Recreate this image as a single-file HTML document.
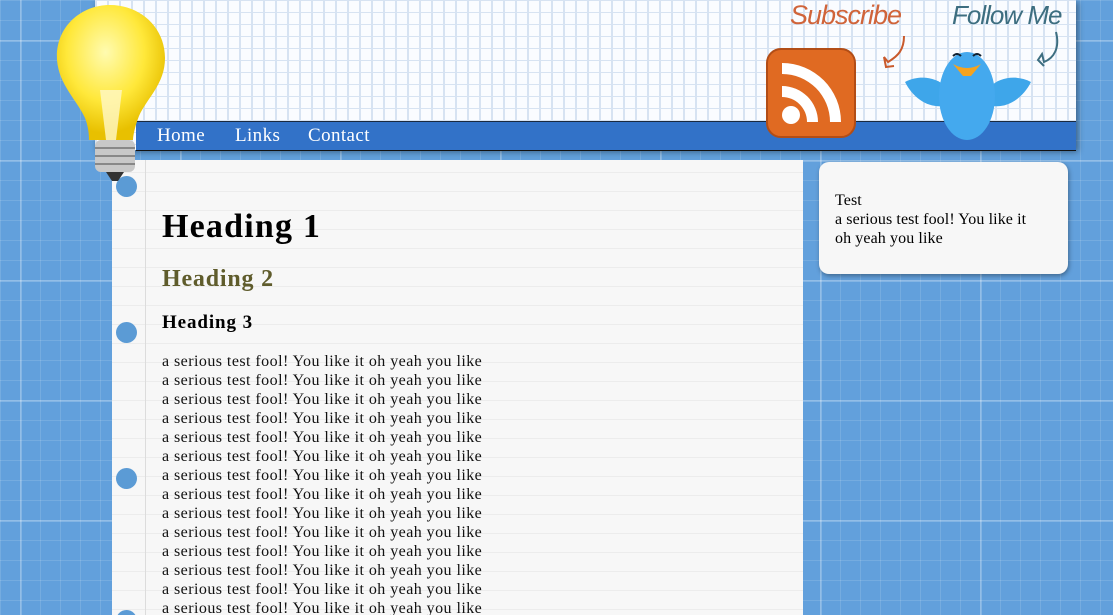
<!DOCTYPE html>
<html><head><meta charset="utf-8"><style>
*{margin:0;padding:0;box-sizing:border-box}
html,body{width:1113px;height:615px;overflow:hidden}
body{background:#62a0dc;font-family:"Liberation Serif",serif;position:relative;
background-image:linear-gradient(rgba(255,255,255,.22) 2px,transparent 2px),linear-gradient(90deg,rgba(255,255,255,.22) 2px,transparent 2px),linear-gradient(rgba(255,255,255,.12) 1px,transparent 1px),linear-gradient(90deg,rgba(255,255,255,.12) 1px,transparent 1px);background-size:160px 120px,160px 120px,20px 20px,20px 20px;background-position:20px 40px}
.header{position:absolute;left:95px;top:0;width:981px;height:150px;background-color:#fafcff;
background-image:linear-gradient(#d7e3f2 1px,transparent 1px),linear-gradient(90deg,#d7e3f2 2px,transparent 2px);background-size:12px 12px;box-shadow:2px 2px 6px rgba(0,0,0,.4)}
.nav{position:absolute;left:136px;top:121px;width:940px;height:30px;background:#3272c8;border-top:1px solid #1a2a40;border-bottom:1px solid #111}
.nav a{position:absolute;top:3px;color:#fff;font-size:19px;letter-spacing:.4px;text-decoration:none}
.paper{position:absolute;left:112px;top:160px;width:691px;height:460px;background-color:#f7f7f7;
background-image:linear-gradient(transparent 18px,#ececec 18px,#ececec 19px,transparent 19px);background-size:100% 19px;background-position:0 13px}
.margin{position:absolute;left:145px;top:160px;width:1px;height:460px;background:#dcdcdc}
.hole{position:absolute;left:116px;width:21px;height:21px;border-radius:50%;background:#5b9bd5}
h1{position:absolute;top:208px;left:162px;font-size:34px;letter-spacing:1.2px;font-weight:bold;white-space:nowrap}
h2{position:absolute;top:266px;left:162px;font-size:24px;letter-spacing:.8px;color:#5f5c2c;white-space:nowrap}
h3{position:absolute;top:312px;left:162px;font-size:19px;letter-spacing:.9px;white-space:nowrap}
.txt{position:absolute;left:162px;top:352px;font-size:16px;line-height:19px;letter-spacing:.45px;color:#111;white-space:nowrap}
.side{position:absolute;left:819px;top:162px;width:249px;height:112px;background:#f7f7f7;border-radius:10px;box-shadow:1px 2px 5px rgba(0,0,0,.35);padding:29px 16px;font-size:16px;line-height:19px;letter-spacing:.1px}
</style></head><body>
<div class="header"></div>
<div class="nav"><a style="left:21px">Home</a><a style="left:99px">Links</a><a style="left:172px">Contact</a></div>
<div class="paper"></div><div class="margin"></div>
<div class="hole" style="top:176px"></div><div class="hole" style="top:322px"></div><div class="hole" style="top:468px"></div><div class="hole" style="top:610px"></div>
<h1>Heading 1</h1><h2>Heading 2</h2><h3>Heading 3</h3>
<div class="txt">a serious test fool! You like it oh yeah you like<br>a serious test fool! You like it oh yeah you like<br>a serious test fool! You like it oh yeah you like<br>a serious test fool! You like it oh yeah you like<br>a serious test fool! You like it oh yeah you like<br>a serious test fool! You like it oh yeah you like<br>a serious test fool! You like it oh yeah you like<br>a serious test fool! You like it oh yeah you like<br>a serious test fool! You like it oh yeah you like<br>a serious test fool! You like it oh yeah you like<br>a serious test fool! You like it oh yeah you like<br>a serious test fool! You like it oh yeah you like<br>a serious test fool! You like it oh yeah you like<br>a serious test fool! You like it oh yeah you like</div>
<div class="side">Test<br>a serious test fool! You like it<br>oh yeah you like</div>
<svg style="position:absolute;left:50px;top:0" width="120" height="185" viewBox="0 0 120 185">
<defs><radialGradient id="bg" cx=".45" cy=".35" r=".6"><stop offset="0" stop-color="#fffbb0"/><stop offset=".6" stop-color="#ffe83a"/><stop offset="1" stop-color="#e8c000"/></radialGradient></defs>
<path d="M60 5C30 5 5 28 7 60c2 25 20 40 28 58 4 10 4 20 4 22h44c0-4 2-14 6-24 8-18 26-32 26-58C115 27 90 5 60 5z" fill="url(#bg)"/>
<path d="M50 90l6 50h10l6-50" fill="#fff8c8" opacity=".8"/>
<rect x="45" y="140" width="40" height="32" rx="6" fill="#c8c8c8"/>
<path d="M45 148h40M45 156h40M45 164h40" stroke="#888" stroke-width="2"/>
<path d="M56 172h18l-6 9h-6z" fill="#333"/>
</svg>
<svg style="position:absolute;left:766px;top:48px" width="90" height="90" viewBox="0 0 90 90">
<rect x="1" y="1" width="88" height="88" rx="14" fill="#e06a22" stroke="#b24d16" stroke-width="2"/>
<circle cx="25" cy="67" r="9" fill="#fff"/>
<path d="M16 38a36 36 0 0 1 36 36h-11a25 25 0 0 0-25-25z M16 15a59 59 0 0 1 59 59h-11a48 48 0 0 0-48-48z" fill="#fff"/>
</svg>
<div style="position:absolute;left:790px;top:0;font-family:'Liberation Sans',sans-serif;font-size:27px;color:#d0643a;font-style:italic;letter-spacing:-1px">Subscribe</div>
<div style="position:absolute;left:952px;top:0;font-family:'Liberation Sans',sans-serif;font-size:26px;color:#3d6e80;font-style:italic;letter-spacing:-1px">Follow Me</div>
<svg style="position:absolute;left:860px;top:30px" width="210" height="60"><path d="M44 6c0 14-6 20-16 26l-4-5 2 10 8-1" stroke="#c95a2c" stroke-width="2" fill="none"/><path d="M196 2c4 16-2 26-12 30l-2-8-4 6 6 6" stroke="#3d6e80" stroke-width="2" fill="none"/></svg>
<svg style="position:absolute;left:903px;top:36px" width="130" height="110" viewBox="0 0 130 110">
<path d="M2 46c15-8 32-4 40 4l-2 20C25 72 10 62 2 46z" fill="#3ea6ea"/>
<path d="M128 46c-15-8-32-4-40 4l2 20c15 2 30-8 38-24z" fill="#3ea6ea"/>
<ellipse cx="64" cy="60" rx="28" ry="44" fill="#44a9ee"/>
<path d="M50 28q14 8 28 0l-10 12h-8z" fill="#f5a31e"/>
<path d="M50 20q4-4 8 0M70 20q4-4 8 0" stroke="#123" stroke-width="2" fill="none"/>
</svg>
</body></html>
